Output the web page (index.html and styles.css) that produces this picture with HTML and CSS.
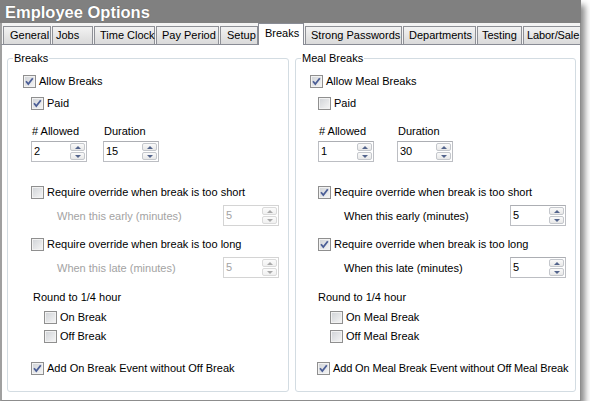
FILE: index.html
```html
<!DOCTYPE html>
<html>
<head>
<meta charset="utf-8">
<title>Employee Options</title>
<link rel="stylesheet" href="styles.css">
</head>
<body>
<div class="window">
  <div class="titlebar">Employee Options</div>
  <div class="tabstrip">
    <div class="tab w-general">General</div>
    <div class="tab w-jobs">Jobs</div>
    <div class="tab w-clock">Time Clock</div>
    <div class="tab w-pay">Pay Period</div>
    <div class="tab w-setup">Setup</div>
    <div class="tab selected w-breaks">Breaks</div>
    <div class="tab w-strong">Strong Passwords</div>
    <div class="tab w-dept">Departments</div>
    <div class="tab w-test">Testing</div>
    <div class="tab w-labor">Labor/Sale</div>
  </div>
  <div class="page">
    <fieldset class="group group-breaks">
      <legend>Breaks</legend>
      <div class="inner">
        <div class="row r-allow"><span class="box"><svg class="tick" viewBox="0 0 11 11"><polyline points="2,5.2 4.3,8 8.8,2.2"/></svg></span>Allow Breaks</div>
        <div class="row r-paid"><span class="box"><svg class="tick" viewBox="0 0 11 11"><polyline points="2,5.2 4.3,8 8.8,2.2"/></svg></span>Paid</div>
        <div class="fields">
          <div class="field">
            <div class="flabel"># Allowed</div>
            <div class="spin"><span class="val">2</span><span class="btns"><span class="btn up"></span><span class="btn down"></span></span></div>
          </div>
          <div class="field field-dur">
            <div class="flabel">Duration</div>
            <div class="spin"><span class="val">15</span><span class="btns"><span class="btn up"></span><span class="btn down"></span></span></div>
          </div>
        </div>
        <div class="row r-short"><span class="box"></span>Require override when break is too short</div>
        <div class="row r-when disabled"><span class="lbl">When this early (minutes)</span><div class="spin"><span class="val">5</span><span class="btns"><span class="btn up"></span><span class="btn down"></span></span></div></div>
        <div class="row r-long"><span class="box"></span>Require override when break is too long</div>
        <div class="row r-when disabled"><span class="lbl">When this late (minutes)</span><div class="spin"><span class="val">5</span><span class="btns"><span class="btn up"></span><span class="btn down"></span></span></div></div>
        <div class="row r-round">Round to 1/4 hour</div>
        <div class="row r-on"><span class="box"></span>On Break</div>
        <div class="row r-off"><span class="box"></span>Off Break</div>
        <div class="row r-add"><span class="box"><svg class="tick" viewBox="0 0 11 11"><polyline points="2,5.2 4.3,8 8.8,2.2"/></svg></span>Add On Break Event without Off Break</div>
      </div>
    </fieldset>
    <fieldset class="group group-meal">
      <legend>Meal Breaks</legend>
      <div class="inner">
        <div class="row r-allow"><span class="box"><svg class="tick" viewBox="0 0 11 11"><polyline points="2,5.2 4.3,8 8.8,2.2"/></svg></span>Allow Meal Breaks</div>
        <div class="row r-paid"><span class="box"></span>Paid</div>
        <div class="fields">
          <div class="field">
            <div class="flabel"># Allowed</div>
            <div class="spin"><span class="val">1</span><span class="btns"><span class="btn up"></span><span class="btn down"></span></span></div>
          </div>
          <div class="field field-dur">
            <div class="flabel">Duration</div>
            <div class="spin"><span class="val">30</span><span class="btns"><span class="btn up"></span><span class="btn down"></span></span></div>
          </div>
        </div>
        <div class="row r-short"><span class="box"><svg class="tick" viewBox="0 0 11 11"><polyline points="2,5.2 4.3,8 8.8,2.2"/></svg></span>Require override when break is too short</div>
        <div class="row r-when"><span class="lbl">When this early (minutes)</span><div class="spin"><span class="val">5</span><span class="btns"><span class="btn up"></span><span class="btn down"></span></span></div></div>
        <div class="row r-long"><span class="box"><svg class="tick" viewBox="0 0 11 11"><polyline points="2,5.2 4.3,8 8.8,2.2"/></svg></span>Require override when break is too long</div>
        <div class="row r-when"><span class="lbl">When this late (minutes)</span><div class="spin"><span class="val">5</span><span class="btns"><span class="btn up"></span><span class="btn down"></span></span></div></div>
        <div class="row r-round">Round to 1/4 hour</div>
        <div class="row r-on"><span class="box"></span>On Meal Break</div>
        <div class="row r-off"><span class="box"></span>Off Meal Break</div>
        <div class="row r-add"><span class="box"><svg class="tick" viewBox="0 0 11 11"><polyline points="2,5.2 4.3,8 8.8,2.2"/></svg></span>Add On Meal Break Event without Off Meal Break</div>
      </div>
    </fieldset>
  </div>
</div>
</body>
</html>
```

FILE: styles.css
```css
* { box-sizing: border-box; }
html, body { margin: 0; padding: 0; background: #fff; }
body {
  font-family: "Liberation Sans", Arial, sans-serif;
  font-size: 11px;
  color: #000;
}

.window {
  width: 581px;
  box-shadow: 4px 5px 6px rgba(0, 0, 0, 0.45);
}

.titlebar {
  height: 23px;
  background: #808080;
  color: #fff;
  font-weight: bold;
  font-size: 16.5px;
  line-height: 24px;
  padding-left: 5px;
  text-shadow: 0 0 1px #4a4a4a;
}

.tabstrip {
  display: flex;
  align-items: flex-end;
  height: 22px;
  padding-left: 1px;
  background: #f4f4f4;
  border-left: 2px solid #a0a0a0;
  border-right: 1px solid #8d8d8d;
  border-bottom: 1px solid #898c95;
}

.tab {
  flex: none;
  height: 18px;
  margin-left: 1px;
  padding-left: 5px;
  line-height: 17px;
  white-space: nowrap;
  border: 1px solid #8e9096;
  border-bottom: none;
  background: linear-gradient(#f3f3f3, #e6e6e6 50%, #dadada);
}
.tab.selected {
  height: 22px;
  margin-bottom: -1px;
  padding-top: 1px;
  padding-left: 6px;
  background: #fff;
  border-color: #898c95;
}
.w-general { width: 48px; margin-left: 0; padding-left: 6px; }
.w-jobs { width: 41px; padding-left: 3px; }
.w-clock { width: 61px; }
.w-pay { width: 63px; }
.w-setup { width: 38px; padding-left: 6px; }
.w-breaks { width: 46px; margin-left: 0; }
.w-strong { width: 97px; }
.w-dept { width: 73px; }
.w-test { width: 45px; padding-left: 4px; }
.w-labor { flex: 1; padding-left: 3px; border-right: none; letter-spacing: -0.1px; }

.page {
  display: flex;
  gap: 6px;
  padding: 7px 4px 8px 5px;
  background: #fff;
  border-left: 2px solid #a0a0a0;
  border-right: 1px solid #8d8d8d;
  border-bottom: 1px solid #8d8d8d;
}

.group {
  margin: 0;
  padding: 0 0 15px;
  min-width: 0;
  border: 1px solid #d3dce2;
  border-radius: 3px;
}
.group-breaks { width: 282px; }
.group-meal { width: 281px; }
.group-meal .inner { margin-left: -1px; }

legend {
  margin-left: 5px;
  padding: 0 1px;
  font-size: 11px;
  line-height: 13px;
}

.inner { padding-top: 8px; }

.row {
  display: flex;
  align-items: center;
  height: 16px;
  white-space: nowrap;
}

.box {
  flex: none;
  display: flex;
  align-items: center;
  justify-content: center;
  width: 13px;
  height: 13px;
  margin-right: 3px;
  border: 1px solid #8f8f8f;
  background: linear-gradient(135deg, #cfd2d6, #f6f6f6);
  box-shadow: inset 0 0 0 1px #f2f2f2;
}
.tick { width: 11px; height: 11px; display: block; }
.tick polyline {
  fill: none;
  stroke: #4b5e96;
  stroke-width: 1.8;
  stroke-linejoin: miter;
}

.r-allow { margin-left: 15px; }
.r-paid { margin-top: 6px; margin-left: 23px; }

.fields { display: flex; margin-top: 12px; margin-left: 23px; }
.field-dur { margin-left: 16px; }
.group-meal .field-dur { margin-left: 23px; }
.flabel { height: 16px; line-height: 16px; margin-left: 1px; margin-bottom: 2px; }

.spin {
  flex: none;
  display: flex;
  width: 56px;
  height: 21px;
  background: #fff;
  border: 1px solid #bcbec3;
  border-top-color: #acaeb3;
}
.spin .val { flex: 1; padding-left: 2px; line-height: 19px; }
.btns {
  display: flex;
  flex-direction: column;
  gap: 1px;
  width: 15px;
  padding: 1px 1px 1px 0;
  box-sizing: content-box;
}
.btn {
  flex: 1;
  display: flex;
  align-items: center;
  justify-content: center;
  border: 1px solid #c4c7cc;
  border-radius: 2px;
  background: linear-gradient(#fafafa, #e8e8e8);
}
.btn::after {
  content: "";
  width: 0;
  height: 0;
  border-left: 3px solid transparent;
  border-right: 3px solid transparent;
}
.btn.up::after { border-bottom: 3px solid #53648c; }
.btn.down::after { border-top: 3px solid #53648c; }

.r-short { margin-top: 22px; margin-left: 23px; }
.r-long { margin-top: 10px; margin-left: 23px; }
.r-when { height: 21px; margin-top: 5px; }
.r-when .lbl { margin-left: 49px; }
.r-when .spin { margin-left: auto; margin-right: 9px; }

.disabled .lbl, .disabled .val { color: #a3a3a3; }
.disabled .spin { border-color: #d4d4d4; }
.disabled .btn { border-color: #dadada; background: linear-gradient(#fbfbfb, #f0f0f0); }
.disabled .btn.up::after { border-bottom-color: #a9a9a9; }
.disabled .btn.down::after { border-top-color: #a9a9a9; }

.r-round { margin-top: 11px; margin-left: 25px; }
.r-on { margin-top: 4px; margin-left: 36px; }
.r-off { margin-top: 3px; margin-left: 36px; }
.r-add { margin-top: 16px; margin-left: 23px; }
.group-meal .r-round { margin-left: 23px; }
.group-meal .r-on { margin-left: 35px; }
.group-meal .r-off { margin-left: 35px; }
.group-meal .r-add { margin-left: 22px; letter-spacing: -0.13px; }
```
